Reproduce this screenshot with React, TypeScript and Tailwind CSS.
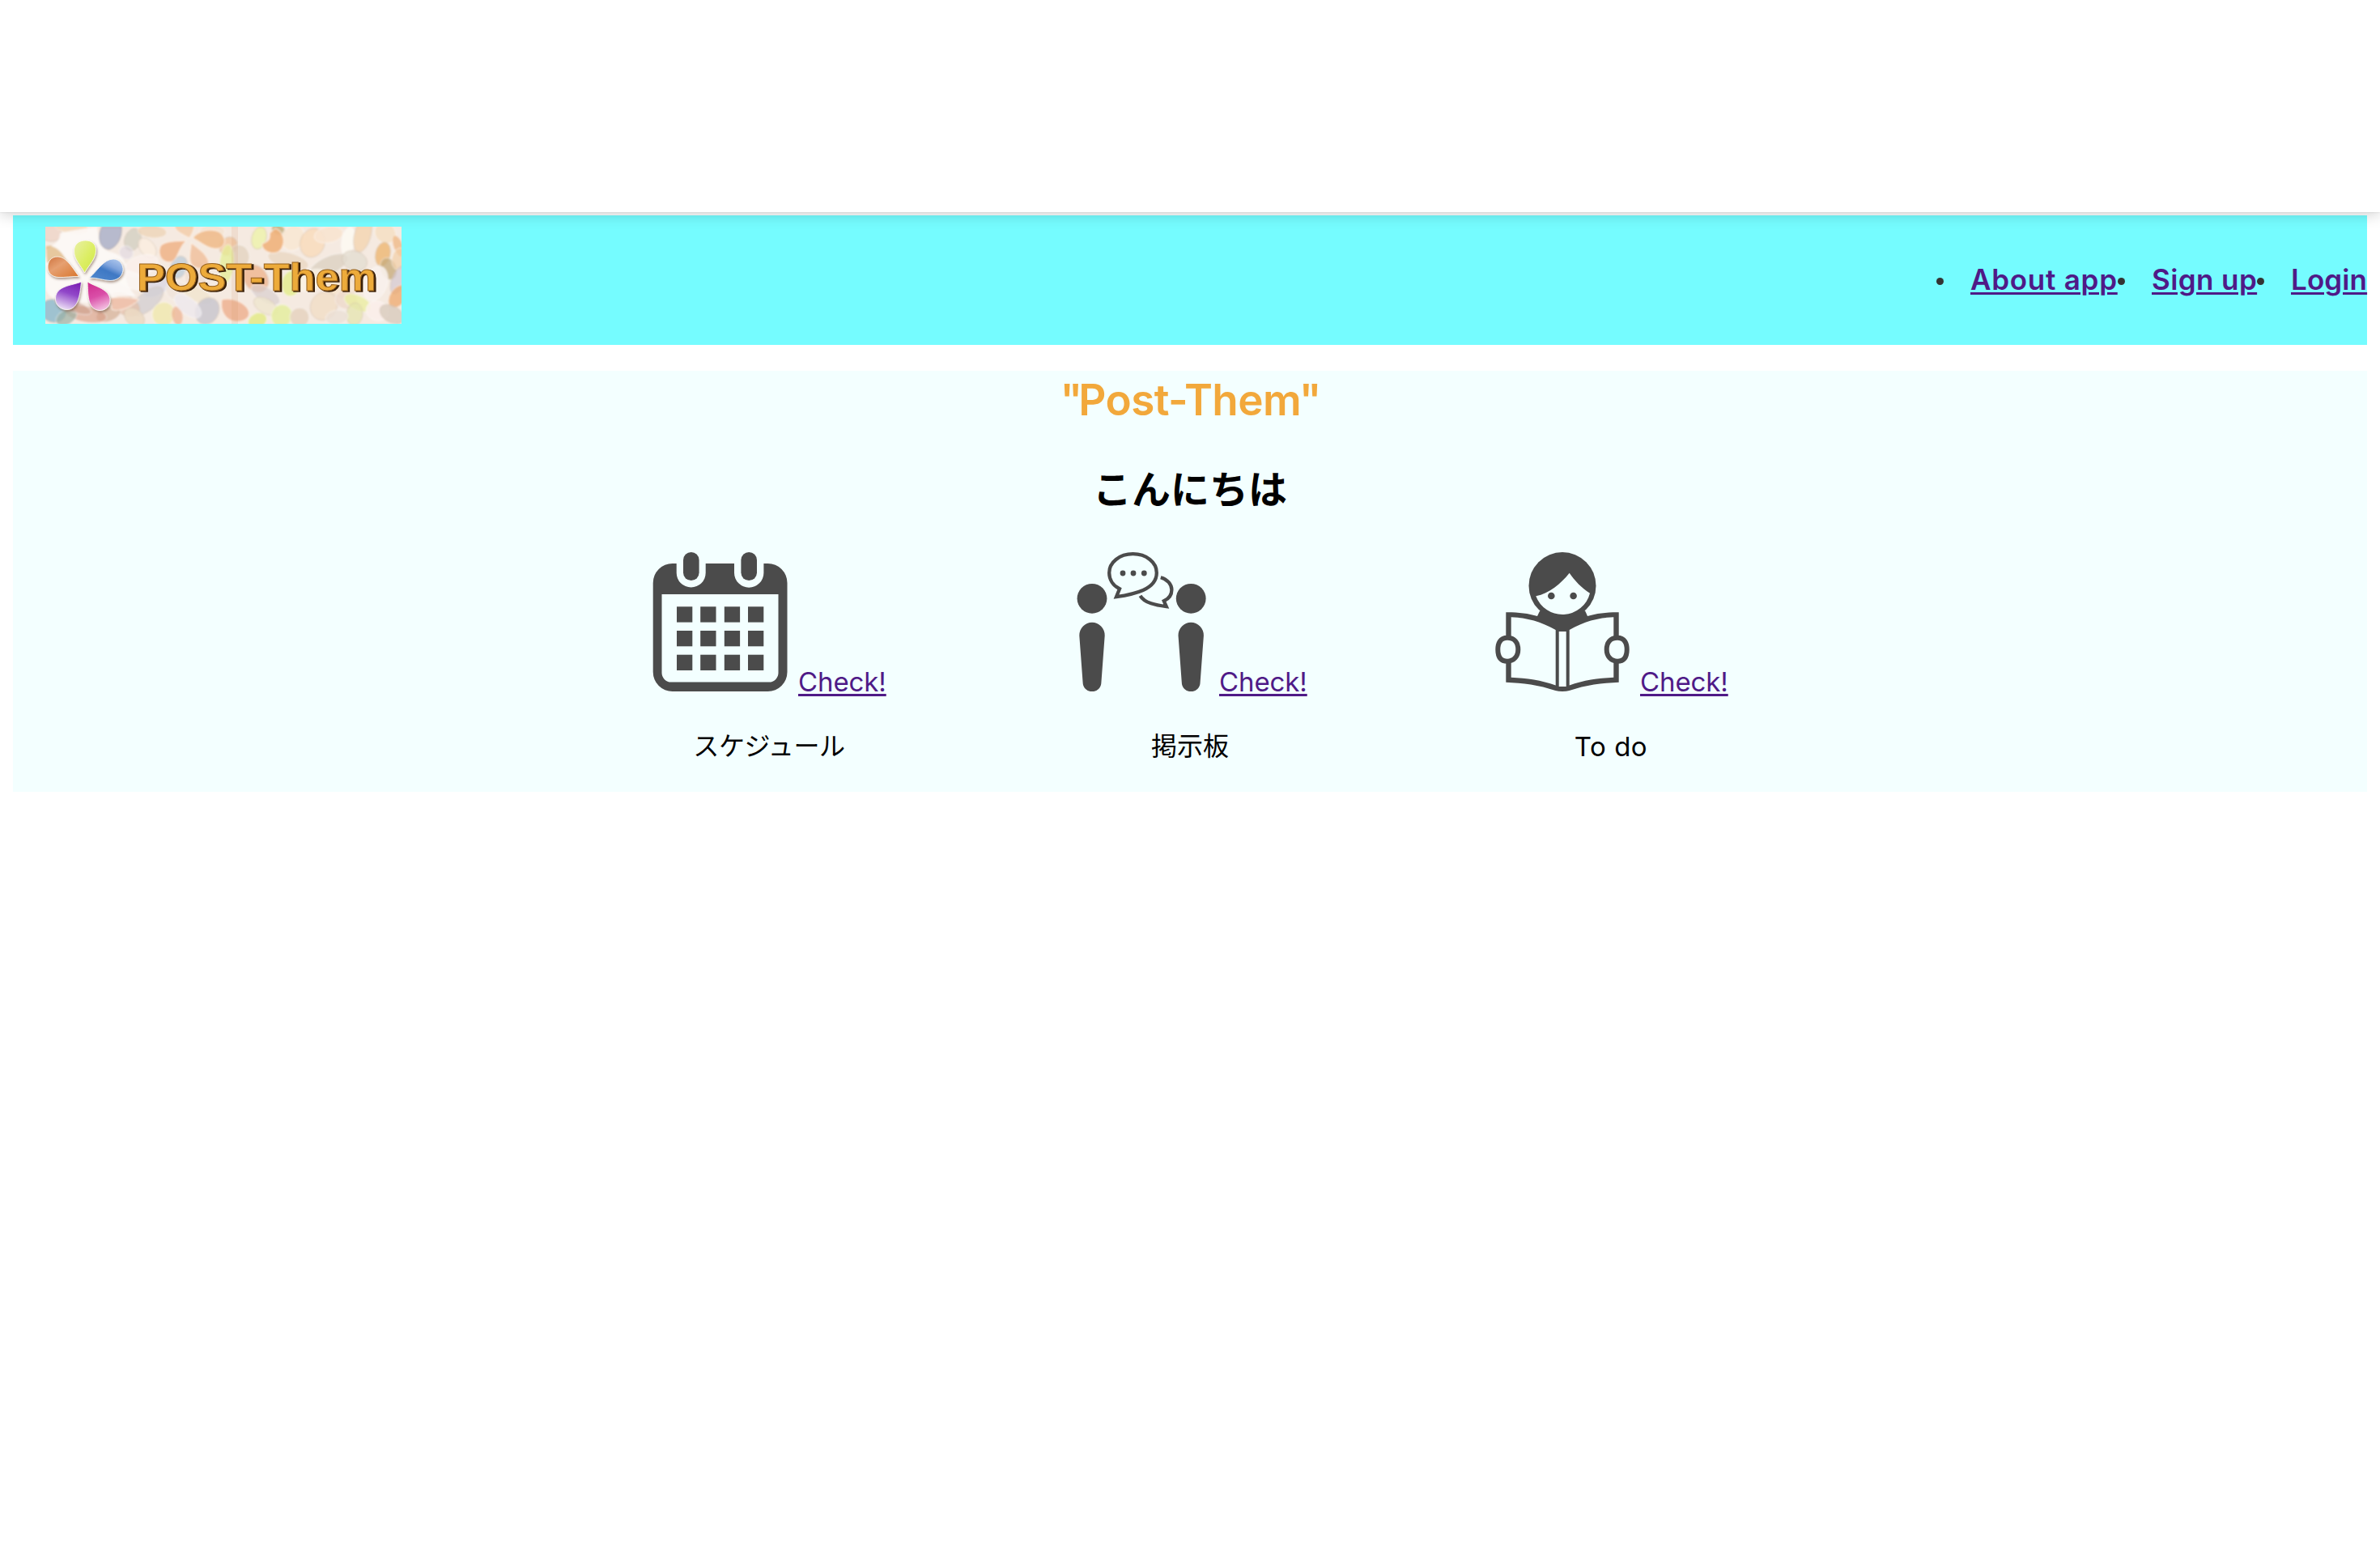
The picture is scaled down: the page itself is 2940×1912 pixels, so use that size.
import type { ReactNode } from "react";

type Blob = [number, number, number, number, number, string, number];

const pebbles: Blob[] = [
  [6, 8, 14, 10, 10, "#eed2c4", 0.7],
  [32, 0, 22, 9, 12, "#f3d9b8", 0.7],
  [10, 36, 11, 14, -30, "#e2bd8a", 0.75],
  [108, 16, 10, 14, 20, "#d3cfc2", 0.8],
  [100, 32, 9, 8, 30, "#dfd7e2", 0.6],
  [132, 6, 18, 8, 5, "#ecd2b2", 0.7],
  [126, 26, 14, 9, 50, "#fbeee0", 0.8],
  [118, 48, 22, 12, -20, "#fbf0ec", 0.8],
  [106, 66, 24, 10, 20, "#fbf6f4", 0.8],
  [165, 50, 10, 14, 20, "#b9cbd8", 0.7],
  [186, 60, 14, 18, 10, "#f0dccb", 0.6],
  [206, 6, 16, 8, 0, "#f4e3d2", 0.8],
  [226, 24, 10, 12, 40, "#f2c096", 0.7],
  [240, 36, 12, 14, -20, "#e4d3c1", 0.8],
  [224, 46, 9, 24, 5, "#e4ee96", 0.75],
  [264, 14, 9, 14, 15, "#eef2b0", 0.9],
  [288, 4, 9, 6, 20, "#b9a46a", 0.7],
  [306, 14, 14, 16, 30, "#f8e8d4", 0.9],
  [330, 20, 15, 18, 20, "#f9dbba", 0.8],
  [350, 10, 18, 10, -10, "#f8e4d0", 0.9],
  [374, 18, 8, 18, 10, "#fdfaf2", 0.9],
  [392, 10, 10, 22, 15, "#f4d5b0", 0.8],
  [420, 8, 14, 12, 40, "#f5dfc2", 0.8],
  [436, 24, 6, 14, -20, "#eeb27b", 0.7],
  [417, 34, 9, 15, 12, "#efba78", 0.85],
  [300, 42, 26, 10, 15, "#e8d4bd", 0.7],
  [350, 48, 26, 11, -25, "#dcd1c2", 0.8],
  [382, 42, 16, 12, 20, "#e4ddd1", 0.8],
  [424, 52, 10, 14, -20, "#c8ad7e", 0.8],
  [438, 40, 10, 14, 10, "#f2cfa6", 0.7],
  [436, 66, 8, 18, 20, "#d3c8d2", 0.7],
  [436, 86, 10, 16, 35, "#edaa6c", 0.75],
  [408, 70, 14, 22, 20, "#f8f1ec", 0.9],
  [260, 64, 14, 18, -35, "#eeb088", 0.75],
  [304, 70, 12, 16, 10, "#e3ec8b", 0.8],
  [328, 66, 22, 12, -20, "#fbf2e2", 0.8],
  [364, 72, 20, 14, 20, "#f8e2c8", 0.7],
  [272, 84, 20, 9, 30, "#d8cece", 0.7],
  [140, 72, 22, 11, -35, "#d8d6e4", 0.75],
  [126, 92, 24, 11, -40, "#d2cdd0", 0.75],
  [164, 80, 16, 12, 20, "#efe3da", 0.7],
  [188, 84, 20, 9, 25, "#f1e5ce", 0.8],
  [98, 96, 20, 12, 30, "#e5bfa9", 0.75],
  [78, 108, 16, 9, -20, "#d6b29a", 0.75],
  [50, 108, 26, 10, 10, "#d89f88", 0.65],
  [10, 104, 16, 14, 20, "#8fbbcd", 0.85],
  [26, 112, 14, 9, -30, "#9cb1a4", 0.7],
  [34, 98, 24, 7, 20, "#c99b8a", 0.5],
  [110, 112, 14, 10, 40, "#ecdac4", 0.9],
  [146, 108, 14, 15, 20, "#f0e8ae", 0.8],
  [163, 110, 7, 12, -10, "#ecaf8d", 0.7],
  [200, 104, 14, 17, 30, "#c9c7cf", 0.85],
  [176, 98, 10, 20, -50, "#eee9ee", 0.8],
  [262, 116, 12, 9, -25, "#e2ea83", 0.8],
  [272, 98, 16, 9, 30, "#efe6ce", 0.8],
  [292, 110, 13, 14, 20, "#e5eda0", 0.85],
  [314, 112, 12, 12, -20, "#e5d1bd", 0.8],
  [344, 98, 16, 18, 35, "#f2dfc9", 0.9],
  [372, 90, 14, 12, 10, "#eedaca", 0.8],
  [386, 94, 18, 9, 25, "#e9ee9e", 0.75],
  [382, 108, 10, 14, 5, "#e4e4ac", 0.7],
  [360, 112, 14, 9, -10, "#ebe0d6", 0.8],
  [410, 104, 14, 12, 20, "#fbeeea", 0.9],
  [428, 108, 16, 10, 30, "#d8cbbd", 0.8],
];

const softPetals: [string, string][] = [
  ["M174 17 C162 30 164 44 152 44 C140 42 138 28 144 22 C152 17 164 18 174 17Z", "#efb68c"],
  ["M182 14 C190 4 204 2 214 6 C224 12 224 24 214 27 C202 29 194 20 182 14Z", "#f0bd8d"],
  ["M180 20 C188 26 200 34 202 44 C200 54 186 54 180 46 C176 38 180 28 180 20Z", "#f1c3a2"],
  ["M178 14 C166 8 158 4 160 -4 L184 -4 C184 4 182 8 178 14Z", "#f3cfae"],
  ["M284 2 C296 6 298 24 288 31 C278 36 266 28 268 21 C274 18 278 18 277 8Z", "#efb27c"],
  ["M218 90 C232 86 252 96 252 108 C250 118 234 120 226 114 C218 108 216 98 218 90Z", "#eeb596"],
  ["M80 88 C96 86 108 88 116 90 C106 100 90 106 82 102Z", "#efc3ae"],
];

function Logo() {
  return (
    <svg viewBox="0 0 440 120" className="block h-[120px] w-[440px]" role="img" aria-label="POST-Them">
      <defs>
        <linearGradient id="gGreen" x1="0" y1="0" x2="1" y2="1">
          <stop offset="0" stopColor="#e9efa6" />
          <stop offset="0.55" stopColor="#dcee63" />
          <stop offset="1" stopColor="#cfe645" />
        </linearGradient>
        <linearGradient id="gOrange" x1="0" y1="0" x2="1" y2="1">
          <stop offset="0" stopColor="#cf7440" />
          <stop offset="0.4" stopColor="#e6a071" />
          <stop offset="1" stopColor="#d8752c" />
        </linearGradient>
        <linearGradient id="gBlue" x1="1" y1="0" x2="0.3" y2="1">
          <stop offset="0" stopColor="#b9cff0" />
          <stop offset="0.4" stopColor="#7ea3dc" />
          <stop offset="0.6" stopColor="#3f78c4" />
          <stop offset="1" stopColor="#4d86cc" />
        </linearGradient>
        <linearGradient id="gPurple" x1="0.6" y1="0" x2="0.3" y2="1">
          <stop offset="0" stopColor="#7d22b4" />
          <stop offset="0.4" stopColor="#9147c9" />
          <stop offset="1" stopColor="#efe4f7" />
        </linearGradient>
        <linearGradient id="gPink" x1="0.3" y1="0" x2="0.6" y2="1">
          <stop offset="0" stopColor="#cf2e90" />
          <stop offset="0.5" stopColor="#da4fa8" />
          <stop offset="1" stopColor="#f3c3e2" />
        </linearGradient>
        <filter id="petalShadow" x="-20%" y="-20%" width="150%" height="150%">
          <feDropShadow dx="1" dy="2" stdDeviation="1.6" floodColor="#6b4a35" floodOpacity="0.55" />
        </filter>
        <filter id="soften">
          <feGaussianBlur stdDeviation="0.8" />
        </filter>
        <clipPath id="logoClip">
          <rect width="440" height="120" />
        </clipPath>
      </defs>
      <g clipPath="url(#logoClip)">
        <rect width="440" height="120" fill="#f5eae1" />
        <g filter="url(#soften)">
          {pebbles.map(([cx, cy, rx, ry, rot, fill, opacity], i) => (
            <ellipse
              key={i}
              cx={cx}
              cy={cy}
              rx={rx}
              ry={ry}
              transform={`rotate(${rot} ${cx} ${cy})`}
              fill={fill}
              fillOpacity={opacity}
              stroke={i % 3 === 0 ? "#cdbba9" : "#ffffff"}
              strokeOpacity="0.55"
              strokeWidth="0.9"
            />
          ))}
          {softPetals.map(([d, fill]) => (
            <path key={d} d={d} fill={fill} fillOpacity="0.9" stroke="#fff5ea" strokeWidth="1" />
          ))}
          <path
            d="M18 8 C36 4 50 2 64 0 C66 20 72 30 80 31 C92 34 96 38 100 48 C100 60 96 68 112 86 C92 86 78 84 72 98 C50 92 30 94 14 90 C-4 84 0 68 0 60 L0 28 C10 22 18 20 18 8Z"
            fill="#fdfaf7"
            fillOpacity="0.9"
          />
          <path d="M1 24 C14 22 24 36 28 46 L2 44Z" fill="#e3c08f" fillOpacity="0.85" />
          <path
            d="M70 0 H94 C95 12 90 24 79 28 C68 28 63 14 70 0Z"
            fill="#b7bacd"
            stroke="#8f8893"
            strokeOpacity="0.6"
            strokeWidth="1"
          />
        </g>
        <rect x="230" width="8" height="120" fill="#c98a60" fillOpacity="0.13" />
        <g filter="url(#petalShadow)" stroke="#fffdf5" strokeWidth="0.8">
          <path d="M48.5 57 C44 48 35.5 41 35.5 30 C35.5 21 42 17 49.5 17 C57 17 62.5 21 62.5 29 C62.5 40 54 47 48.5 57Z" fill="url(#gGreen)" />
          <path d="M41.5 61.5 C33 50 26 37 15 37 C7 37 3 43 3 50 C3 57 8 62 16 62.5 C24 63 33 61 41.5 61.5Z" fill="url(#gOrange)" />
          <path d="M54.5 63 C64 55 72 40 84 40 C92 40 96.5 47 96 54 C95 62 88 66.5 80 66.5 C71 66 64 63 54.5 63Z" fill="url(#gBlue)" />
          <path d="M44.5 68 C43 80 42 102 27 102.5 C18 102.5 12 96 12.5 88 C13.5 73 32 73 44.5 68Z" fill="url(#gPurple)" />
          <path d="M52 68 C61 74 80 77 80 91 C80 99 74 103.5 67 103.5 C51 102 53 82 52 68Z" fill="url(#gPink)" />
        </g>
        <g fontFamily='"Liberation Sans", Arial, sans-serif' fontWeight="700" fontSize="49">
          <text x="115" y="80.3" textLength="296" lengthAdjust="spacingAndGlyphs" fill="#38200a" stroke="#38200a" strokeWidth="1.6">
            POST-Them
          </text>
          <text x="113" y="78.5" textLength="296" lengthAdjust="spacingAndGlyphs" fill="#edab3a" stroke="#9a6420" strokeWidth="1">
            POST-Them
          </text>
        </g>
      </g>
    </svg>
  );
}

function CalendarIcon() {
  return (
    <svg viewBox="0 0 172 172" className="block size-[172px]" fill="#4b4b4b">
      <path
        fillRule="evenodd"
        d="M26.7 14 H31.7 V25.5 A18 18 0 0 0 67.7 25.5 V14 H103 V25.5 A18.2 18.2 0 0 0 139.4 25.5 V14 H144.5 A24 24 0 0 1 168.5 38 V148 A24 24 0 0 1 144.5 172 H26.7 A24 24 0 0 1 2.7 148 V38 A24 24 0 0 1 26.7 14Z M13.5 52 V149 A11.5 11.5 0 0 0 25 160.5 H146 A11.5 11.5 0 0 0 157.5 149 V52Z"
      />
      <rect x="40" y="0" width="19.6" height="35" rx="9.8" />
      <rect x="111.4" y="0" width="19.6" height="35" rx="9.8" />
      {[67.3, 97, 126.7].map((y) =>
        [32, 61.2, 90.8, 120].map((x) => <rect key={`${x}-${y}`} x={x} y={y} width="19.3" height="19.3" />),
      )}
    </svg>
  );
}

function TalkIcon() {
  return (
    <svg viewBox="0 0 172 172" className="block size-[172px]" fill="#4b4b4b">
      {[0, 122.2].map((dx) => (
        <g key={dx} transform={`translate(${dx} 0)`}>
          <circle cx="25" cy="57.3" r="18.4" />
          <path d="M9.3 103 A15.7 16.2 0 0 1 40.7 103 L36.4 161 A11.4 11.2 0 0 1 13.6 161Z" />
        </g>
      ))}
      <g fill="none" stroke="#4b4b4b" strokeWidth="4.3">
        <path d="M75.5 2.2 C59 2.2 46.2 12.5 46.2 25.5 C46.2 34 51 41.5 59 45.3 L55 55.2 C66 53.6 80 50.5 88 47 C98 42.5 104.8 35 104.8 25.5 C104.8 12.5 92 2.2 75.5 2.2Z" />
        <path d="M109.8 31.2 C118 33.5 123.4 39.5 123.4 46.5 C123.4 52.5 120 57.5 113.8 60.3 L116.8 67.2 C104 65.5 90 63 84.5 53.8" />
      </g>
      <circle cx="63" cy="26" r="3.4" />
      <circle cx="76" cy="26" r="3.4" />
      <circle cx="89.3" cy="26" r="3.4" />
    </svg>
  );
}

function ReaderIcon() {
  const hand =
    "M18 105.7 C27 105.7 31.3 112 31.3 120.2 C31.3 128.5 26 134.7 18 134.7 C9 134.7 6.3 128 6.3 120.2 C6.3 112.5 9 105.7 18 105.7Z";
  return (
    <svg viewBox="0 0 172 172" className="block size-[172px]" fill="#4b4b4b">
      <circle cx="86" cy="41.5" r="41.5" />
      <path d="M58.3 72.3 H114 L117 79 L93.7 95.7 H77.7 L55 79Z" />
      <path
        fillRule="evenodd"
        d="M16.3 74.2 C30 74 44 75.5 55 79 L117 79 C128 75.5 142 74 155.7 74.2 V160.7 C135 161.5 115 164 94.5 171 Q91 172 86 172 Q81 172 77.5 171 C57 164 37 161.5 16.3 160.7Z M22.7 80.3 V154.7 C42 155.5 60 158 77.7 164.5 V96 C60 86 42 81 22.7 80.3Z M149.3 80.3 C130 81 112 86 94.7 96 V164.5 C112 158 130 155.5 149.3 154.7Z M81.7 98 V166 H90.7 V98Z"
      />
      <path d="M53.3 54.3 C70 51 84 39 94.7 25.7 C101 35 110 44.5 120 50.7 A35 35 0 0 1 53.3 54.3Z" fill="#f3ffff" />
      <circle cx="72.3" cy="54" r="4.3" />
      <circle cx="99.6" cy="54" r="4.3" />
      <g fill="#f3ffff" stroke="#4b4b4b" strokeWidth="6">
        <path d={hand} />
        <path d={hand} transform="translate(172 0) scale(-1 1)" />
      </g>
    </svg>
  );
}

function NavItem({ label, sizing }: { label: string; sizing: string }) {
  return (
    <li className="flex items-center">
      <span className="mt-[5px] mr-[33px] size-[9px] rounded-full bg-[#333333]" />
      <a
        href="#"
        className={`${sizing} text-[35px] leading-[48px] font-semibold whitespace-nowrap text-[#4f1a87] underline decoration-[3px] underline-offset-[3px]`}
      >
        {label}
      </a>
    </li>
  );
}

function Card({ icon, caption, captionStyle }: { icon: ReactNode; caption: string; captionStyle: string }) {
  return (
    <div className="flex w-[520px] flex-col items-center">
      <div className="flex h-[172px] items-end">
        {icon}
        <a
          href="#"
          className="-mb-[12px] ml-[10px] w-[110px] text-[33px] leading-[48px] font-normal tracking-[-0.1px] whitespace-nowrap text-[#4f1a87] underline decoration-[3px] underline-offset-[3px]"
        >
          Check!
        </a>
      </div>
      <p className={`${captionStyle} mt-[44px] leading-[48px] text-black`}>{caption}</p>
    </div>
  );
}

export default function App() {
  return (
    <div className="min-h-[1912px] bg-white font-['Inter','Noto_Sans_CJK_JP',sans-serif]">
      <div className="relative z-10 h-[262px] bg-white shadow-[0_0_2px_rgba(0,0,0,0.12),0_2px_18px_rgba(0,0,0,0.2)]" />
      <header className="mx-4 mt-1 flex h-[160px] items-start justify-between bg-[#75fcff]">
        <div className="mt-[14px] ml-10">
          <Logo />
        </div>
        <nav className="mt-[55px]">
          <ul className="flex">
            <NavItem label="About app" sizing="w-[182px] tracking-[0.75px]" />
            <NavItem label="Sign up" sizing="w-[130px] tracking-[0.4px]" />
            <NavItem label="Login" sizing="w-[94px] tracking-[0.1px]" />
          </ul>
        </nav>
      </header>
      <main className="mx-4 mt-8 flex h-[520px] flex-col items-center bg-[#f3ffff]">
        <h1 className="text-[53px] leading-[72px] font-semibold tracking-[-0.6px] text-[#f2a83b]">
          <span className="tracking-[-5px]">"</span>Post-The<span className="tracking-[-3px]">m</span>
          <span className="tracking-[-2px]">"</span>
        </h1>
        <h2 className="mt-[39px] text-[48px] leading-[72px] font-bold text-black">こんにちは</h2>
        <div className="mt-[41px] flex">
          <Card icon={<CalendarIcon />} caption="スケジュール" captionStyle="text-[32px] tracking-[-0.4px]" />
          <Card icon={<TalkIcon />} caption="掲示板" captionStyle="text-[32px]" />
          <Card icon={<ReaderIcon />} caption="To do" captionStyle="text-[33px] tracking-[0.5px]" />
        </div>
      </main>
    </div>
  );
}
